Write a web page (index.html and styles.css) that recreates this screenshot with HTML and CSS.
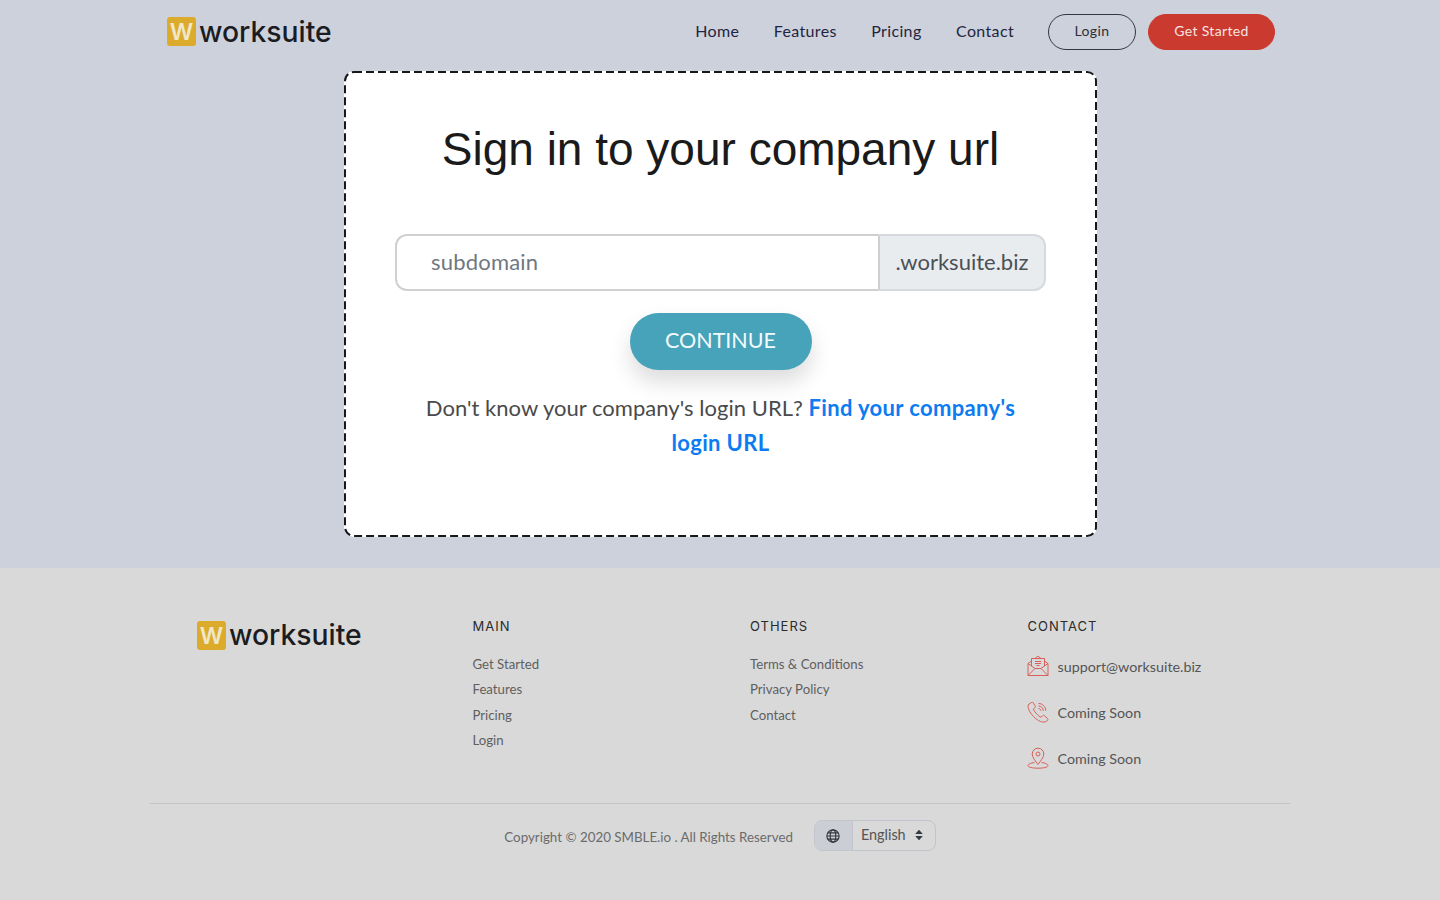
FILE: index.html
```html
<!DOCTYPE html>
<html lang="en">
<head>
    <meta charset="UTF-8">
    <meta name="viewport" content="width=device-width, initial-scale=1.0">
    <title>Worksuite - Sign in to your company url</title>
    <link rel="stylesheet" href="styles.css">
</head>
<body>

    <section class="hero">
        <header class="topbar">
            <a class="logo" href="#">
                <span class="logo-mark">W</span>
                <span class="logo-text">worksuite</span>
            </a>
            <nav class="nav">
                <a href="#">Home</a>
                <a href="#">Features</a>
                <a href="#">Pricing</a>
                <a href="#">Contact</a>
            </nav>
            <a class="btn-login" href="#">Login</a>
            <a class="btn-started" href="#">Get Started</a>
        </header>

        <div class="card">
            <!-- CSS dashes come out too short, so the border is drawn here -->
            <svg class="card-border" width="753" height="466">
                <rect x="1" y="1" width="751" height="464" rx="9" fill="none" stroke="#16181d" stroke-width="2" stroke-dasharray="8 4"/>
            </svg>
            <h1>Sign in to your company url</h1>
            <div class="url-group">
                <div class="url-input">subdomain</div>
                <div class="url-suffix">.worksuite.biz</div>
            </div>
            <button class="btn-continue" type="button">CONTINUE</button>
            <p class="help">Don't know your company's login URL? <a href="#">Find your company's</a><br><a href="#">login URL</a></p>
        </div>
    </section>

    <footer class="footer">
        <div class="footer-cols">
            <div class="footer-logo">
                <a class="logo" href="#">
                    <span class="logo-mark">W</span>
                    <span class="logo-text">worksuite</span>
                </a>
            </div>
            <div class="footer-col">
                <h4>MAIN</h4>
                <a href="#">Get Started</a>
                <a href="#">Features</a>
                <a href="#">Pricing</a>
                <a href="#">Login</a>
            </div>
            <div class="footer-col">
                <h4>OTHERS</h4>
                <a href="#">Terms &amp; Conditions</a>
                <a href="#">Privacy Policy</a>
                <a href="#">Contact</a>
            </div>
            <div class="footer-col footer-contact">
                <h4>CONTACT</h4>
                <div class="contact-row">
                    <svg viewBox="0 0 22 22" width="22" height="22" fill="none" stroke="#d9605a" stroke-width="1">
                        <path d="M1 8.5 4.5 6M21 8.5 17.500 6M8 3.500 11 1.200 14 3.500"/>
                        <path d="M1 8.500V20.500H21V8.500L14 13.500H8Z"/>
                        <path d="M1 20.500 8 13.500M21 20.500 14 13.500"/>
                        <path d="M4.500 11V3.500H17.500V11"/>
                        <path d="M8 6.500H14M8 8.500H14M9.500 10.500H12.500"/>
                    </svg>
                    <span>support@worksuite.biz</span>
                </div>
                <div class="contact-row">
                    <svg viewBox="0 0 22 22" width="22" height="22" fill="none" stroke="#d9605a" stroke-width="1">
                        <path d="M4.500 1.500 2 3C.8 4 .8 6 1.800 8.500 3.500 13 8.500 18.500 13.500 20.500 16 21.500 18 21.200 20 20 21 19.300 21.200 18.200 20.500 17.500L17.500 14.800C16.800 14.200 16 14.300 15.400 14.900L14 16.300C11 15 7.500 11 6.300 8L7.800 6.800C8.400 6.200 8.500 5.500 8.100 4.800L6.200 1.800C5.800 1.200 5.100 1.100 4.500 1.500Z"/>
                        <path d="M11.500 7.500C12.800 7.500 13.800 8.500 13.800 9.800M11.500 5C14.200 5 16.300 7.100 16.300 9.800M11.500 2.500C15.600 2.500 18.800 5.700 18.800 9.800"/>
                    </svg>
                    <span>Coming Soon</span>
                </div>
                <div class="contact-row">
                    <svg viewBox="0 0 22 22" width="22" height="22" fill="none" stroke="#d9605a" stroke-width="1">
                        <path d="M11 17.500C8.500 14 5.200 10.500 5.200 7A5.800 5.800 0 0 1 16.800 7C16.800 10.500 13.500 14 11 17.500Z"/>
                        <circle cx="11" cy="7" r="2"/>
                        <path d="M7.500 15.500C3.500 16 1 17.300 1 18.600 1 20.200 5.500 21.200 11 21.200S21 20.200 21 18.600C21 17.300 18.500 16 14.500 15.500"/>
                    </svg>
                    <span>Coming Soon</span>
                </div>
            </div>
        </div>
        <div class="footer-bottom">
            <span class="copyright">Copyright © 2020 SMBLE.io . All Rights Reserved</span>
            <div class="lang-select">
                <span class="lang-icon">
                    <svg viewBox="0 0 16 16" width="14" height="14" fill="none" stroke="#33373b" stroke-width="1.300">
                        <circle cx="8" cy="8" r="7"/>
                        <ellipse cx="8" cy="8" rx="3.200" ry="7"/>
                        <path d="M1 8H15M2 4.500H14M2 11.500H14"/>
                    </svg>
                </span>
                <span class="lang-value">English
                    <svg viewBox="0 0 8 12" width="8" height="12" fill="#343a40">
                        <path d="M4 .8 7.800 5H.2ZM4 11.200 .2 7H7.800Z"/>
                    </svg>
                </span>
            </div>
        </div>
    </footer>

</body>
</html>
```

FILE: styles.css
```css
/* Page */
body {
    margin: 0;
    font-family: "Lato", "Open Sans", sans-serif;
    color: #333;
    background-color: #d9d9d9;
}

a {
    text-decoration: none;
}

/* Top section */
.hero {
    height: 568px;
    background-color: #cdd1db;
    box-sizing: border-box;
}

.topbar {
    display: flex;
    align-items: center;
    height: 63px;
    padding: 0 165px 0 167px;
}

/* Logo */
.logo {
    display: flex;
    align-items: center;
    gap: 3px;
}

.logo-mark {
    width: 29px;
    height: 29px;
    border-radius: 3px;
    background-color: #dcab2b;
    color: #f0e6c8;
    font-family: "Inter", sans-serif;
    font-size: 23px;
    font-weight: 600;
    line-height: 31px;
    text-align: center;
}

.logo-text {
    font-family: "Inter", sans-serif;
    font-size: 28.300px;
    font-weight: 500;
    line-height: 30px;
    color: #1b1c1f;
}

/* Nav */
.nav {
    display: flex;
    gap: 34.500px;
    margin-left: auto;
    margin-right: 34px;
    padding-bottom: 2px;
}

.nav a {
    font-size: 16px;
    letter-spacing: 0.350px;
    color: #1f2540;
}

.btn-login, .btn-started {
    height: 36px;
    box-sizing: border-box;
    border-radius: 18px;
    font-size: 14px;
    letter-spacing: 0.350px;
    line-height: 32px;
    text-align: center;
}

.btn-login {
    width: 88px;
    margin-right: 12px;
    border: 1px solid #33373f;
    color: #2b2f38;
}

.btn-started {
    width: 127px;
    border: 1px solid #cb3a2e;
    background-color: #cb3a2e;
    color: #f6e5e2;
}

/* Sign in card */
.card {
    position: relative;
    width: 753px;
    height: 466px;
    margin: 8px 343px 0 344px;
    box-sizing: border-box;
    padding: 46px 51px 0;
    border-radius: 10px;
    background-color: #fff;
    text-align: center;
}

.card-border {
    position: absolute;
    top: 0;
    left: 0;
}

.card h1 {
    margin: 0;
    font-family: "Liberation Sans", Arial, sans-serif;
    font-size: 46px;
    font-weight: 400;
    line-height: 64px;
    color: #1a1a1a;
}

.url-group {
    display: flex;
    height: 57px;
    margin-top: 53px;
    font-size: 22px;
}

.url-input {
    flex: 1;
    padding-left: 34px;
    border: 2px solid #d0d0d0;
    border-right: 0;
    border-radius: 12px 0 0 12px;
    color: #6f7780;
    letter-spacing: 0.200px;
    line-height: 52px;
    text-align: left;
}

.url-suffix {
    width: 168px;
    box-sizing: border-box;
    border: 2px solid #d6d9dd;
    border-left: 2px solid #cfcfcf;
    border-radius: 0 12px 12px 0;
    background-color: #e9ecef;
    color: #4b5056;
    line-height: 52px;
    text-align: center;
}

.btn-continue {
    display: block;
    width: 182px;
    height: 57px;
    margin: 22px auto 0;
    padding: 0 0 4px;
    border: none;
    border-radius: 29px;
    background-color: #46a3b9;
    box-shadow: 0 12px 22px rgba(0, 0, 0, 0.14);
    color: #f2fafc;
    font-family: inherit;
    font-size: 21.500px;
}

.help {
    margin: 20px 0 0;
    font-size: 22px;
    letter-spacing: 0.030px;
    line-height: 35px;
    color: #4a4a4a;
}

.help a {
    color: #0d7bf2;
    font-weight: 700;
    letter-spacing: 0.350px;
}

/* Footer */
.footer {
    height: 332px;
    box-sizing: border-box;
    padding: 50px 150px 0;
}

.footer-cols {
    display: grid;
    grid-template-columns: 322.500px 277.500px 277.500px 1fr;
    height: 185px;
    border-bottom: 1px solid #c3c5ca;
}

.footer-logo {
    padding-left: 47px;
    padding-top: 2px;
}

.footer-col h4 {
    margin: 0 0 18px;
    font-family: "Inter", sans-serif;
    font-size: 13px;
    font-weight: 400;
    line-height: 16px;
    letter-spacing: 1px;
    color: #2b2b2b;
}

.footer-col a {
    display: block;
    font-size: 13.200px;
    line-height: 25.300px;
    color: #5f5f5f;
}

.contact-row {
    display: flex;
    align-items: center;
    gap: 9px;
    height: 46px;
    font-size: 14.300px;
    color: #555;
}

.contact-row svg {
    margin-left: -1px;
}

.footer-contact h4 {
    margin-bottom: 9px;
}

.footer-bottom {
    display: flex;
    align-items: center;
    justify-content: center;
    gap: 21px;
    padding: 16px 0 0 0;
}

.copyright {
    font-size: 13.350px;
    color: #6b6b6b;
    padding-top: 3px;
}

.lang-select {
    display: flex;
    height: 31px;
    box-sizing: border-box;
    border: 1px solid #c2c5cb;
    border-radius: 8px;
    overflow: hidden;
}

.lang-icon {
    display: flex;
    align-items: center;
    justify-content: center;
    width: 38px;
    box-sizing: border-box;
    border-right: 1px solid #c2c5cb;
    background-color: #cbced4;
}

.lang-value {
    display: flex;
    align-items: center;
    gap: 9px;
    padding: 0 12px 2px 8px;
    font-size: 14.400px;
    color: #555;
}
```
